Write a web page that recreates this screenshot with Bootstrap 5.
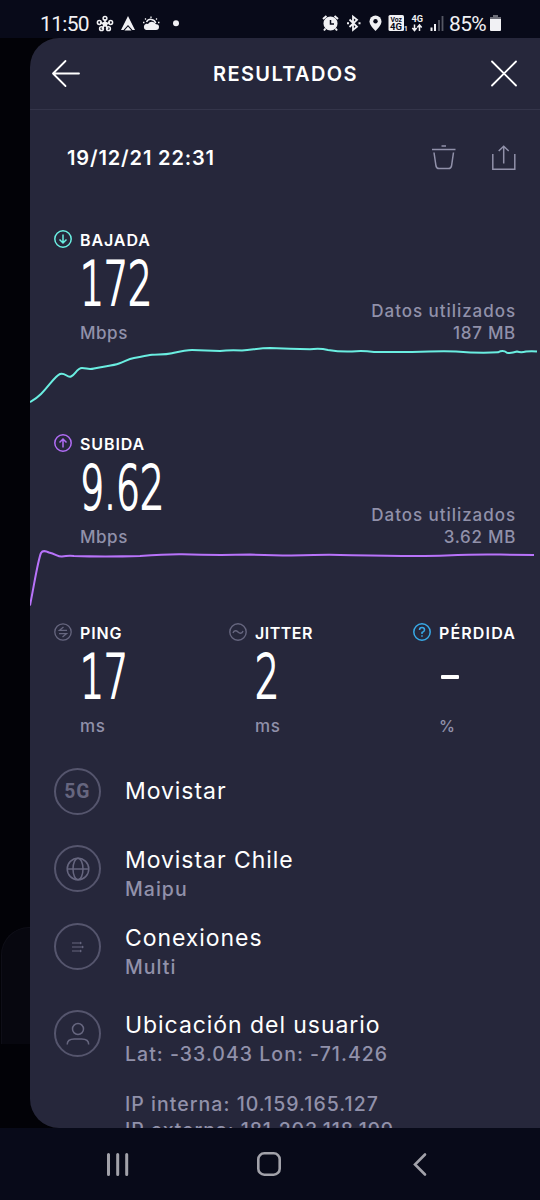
<!DOCTYPE html>
<html lang="es">
<head>
<meta charset="utf-8">
<meta name="viewport" content="width=device-width, initial-scale=1">
<title>Resultados</title>
<link href="https://cdn.jsdelivr.net/npm/bootstrap@5.3.0/dist/css/bootstrap.min.css" rel="stylesheet">
<style>
:root{--muted:#9191aa;--line:#55556d}
body{width:540px;height:1200px;background:#020207;color:#fff;font-family:Inter,"Noto Sans",sans-serif;overflow:hidden}
svg{display:block;flex:none;overflow:visible}
.statusbar{height:38px;background:#080a19;font-family:Roboto,sans-serif;color:#f1f1f4;padding:10px 39px 0 40px}
.clock{font-size:21px;line-height:28px;letter-spacing:-.67px;white-space:nowrap}
.stage{height:1090px;padding-left:30px;position:relative}
.ghost{position:absolute;left:1px;top:889px;width:60px;height:117px;background:#07070f;border:1px solid #0e0e17;border-bottom:0;border-radius:28px 0 0 0}
.sheet{position:relative;height:1090px;background:#26273b;border-radius:29px 0 0 29px;overflow:hidden}
.topbar{height:72px;border-bottom:1px solid #34354a;padding:0 23px 0 22px}
.topbar h1{font-size:20px;font-weight:600;letter-spacing:1.38px;padding-top:1px}
.daterow{height:96px;padding:0 24px 0 37px;color:var(--muted)}
.daterow time{font-size:20px;font-weight:600;color:#fff;letter-spacing:.87px}
.speed{height:204px;padding-top:22px}
.speed-body{padding:0 24px 0 50px}
.lab{height:22px;padding-left:24px;font-size:16px;font-weight:600;line-height:22px;gap:8px;letter-spacing:.9px}
.lab span{padding-top:2px}
.lab-tight{letter-spacing:.5px}
.lab-wide{letter-spacing:1.14px}
.num{font-family:"DejaVu Sans",sans-serif;font-weight:200;font-size:60px;line-height:68px;height:68px;transform:scaleX(.63);transform-origin:0 50%;white-space:nowrap;-webkit-text-stroke:2.2px #fff}
.dash{width:18px;height:4px;border-radius:1px;background:#fff;margin:32px 0 32px 2px}
.unit{font-size:17px;font-weight:500;line-height:30px;height:28px;color:var(--muted);letter-spacing:.55px}
.used{font-size:17px;font-weight:500;line-height:22px;color:var(--muted);padding-bottom:2px;letter-spacing:.95px}
.used .amount{letter-spacing:.7px}
.metrics{height:154px;padding-top:7px}
.metrics .unit{line-height:31px}
.metrics .lab span{padding-top:1px}
.pct{font-size:16px!important}
.m1{width:175px}.m2{width:184px}
.val{padding-left:50px}
.entry{padding-left:24px;gap:24px}
.ring{width:47px;height:47px;border:2px solid var(--line);border-radius:50%;color:#66667f;flex:none}
.ttl{font-size:23px;line-height:30px;font-weight:400;letter-spacing:.94px;white-space:nowrap}
.sub{font-size:19.5px;line-height:28px;font-weight:500;color:var(--muted);letter-spacing:1.03px;white-space:nowrap}
.ips{line-height:25px;padding-top:24px}
.ips div+div{letter-spacing:.9px;padding-top:1px}
.five{font-family:Roboto,sans-serif;font-weight:700;font-size:21px;line-height:1;letter-spacing:1px;transform:scaleX(.92)}
.navkeys{height:72px;background:#080a19;color:#a2a2aa;padding:0 113px 0 107px}
.home{margin-right:5px}
.h77{height:77px}.h78{height:78px}.h87{height:87px}
</style>
</head>
<body>
<header class="statusbar d-flex justify-content-between">
  <div class="d-flex">
    <span class="clock">11:50</span>
    <svg width="100" height="28" viewBox="89 10 100 28" fill="none" stroke="#f1f1f4" stroke-width="1.5">
      <path d="M105 24v-5M105 24l-5-1.5M105 24l5-1.500M105 24l-3 5M105 24l3 5"/><circle cx="105" cy="24" r="1.8" fill="#f1f1f4"/><circle cx="105" cy="18.300" r="1.900"/><circle cx="99.300" cy="22.500" r="1.900"/><circle cx="110.700" cy="22.500" r="1.900"/><circle cx="101.500" cy="28.700" r="1.900"/><circle cx="108.500" cy="28.700" r="1.900"/>
      <path d="M128 16l7 14h-2.500l-4.500-5-4.500 5H121z" fill="#f1f1f4" stroke="none"/><path d="M124.500 30.500l3.500-4 3.500 4z" fill="#f1f1f4" stroke="none"/>
      <path d="M146 30a3.300 3.300 0 010-6.200q1-.300 2 .200a4.500 4.500 0 018 .300q3-.200 3 2.700t-3 3z" fill="#f1f1f4" stroke="none"/>
      <path d="M146.500 22a5 5 0 019.200 1"/><path d="M151 16.500v1.500M145 18.500l1 1M157 18.500l-1 1M143 22.500h1.500M158 22.500h1.500" stroke-width="1.300"/>
      <circle cx="176" cy="23.300" r="3" fill="#f1f1f4" stroke="none"/>
    </svg>
  </div>
  <div class="d-flex">
    <svg width="128" height="28" viewBox="321 10 128 28" fill="none" stroke="#f1f1f4" stroke-width="1.500">
      <circle cx="330.500" cy="23.500" r="6.300" fill="#f1f1f4"/><path d="M330.500 20v4h3.500" stroke="#080a19"/><path d="M323 19l3.500-3M338 19l-3.500-3M325.500 28.500l-1.500 2M335.500 28.500l1.500 2" stroke-width="2"/>
      <path d="M349.500 19.500l7.500 7.300-4 3.200v-13.400l4 3.200-7.500 7.200" stroke-width="1.800"/><path d="M347 23.300h2M358.500 23.300h2" stroke-width="2"/>
      <path d="M375.500 15.500a6 6 0 016 6c0 4-6 9.500-6 9.500s-6-5.500-6-9.500a6 6 0 016-6z" fill="#f1f1f4" stroke="none"/><circle cx="375.500" cy="21.300" r="2.200" fill="#080a19" stroke="none"/>
      <rect x="388.500" y="15" width="15.500" height="16" rx="1.500" fill="#f1f1f4" stroke="none"/>
      <g stroke="none" font-family="Roboto,sans-serif" font-weight="700"><text x="390.500" y="21.500" font-size="7" fill="#080a19" textLength="11.500" lengthAdjust="spacingAndGlyphs">Voz</text><text x="390" y="30.300" font-size="9.500" fill="#080a19" textLength="12" lengthAdjust="spacingAndGlyphs">4G</text><text x="404" y="31" font-size="6.500" fill="#f1f1f4">1</text><text x="411.500" y="22" font-size="8.500" fill="#f1f1f4" textLength="11.500" lengthAdjust="spacingAndGlyphs">4G</text></g>
      <path d="M414.500 24.500v6M412.300 28l2.200 2.500 2.200-2.500M419.500 31v-6M417.300 27.500l2.200-2.500 2.200 2.500" stroke-width="1.500"/>
      <path d="M431.500 27.500v3.500M435 24v7" stroke-width="2"/><path d="M439 20v11M442.500 16v15" stroke="#555763" stroke-width="1.800"/>
    </svg>
    <span class="clock">85%</span>
    <svg class="ms-1" width="11" height="28" viewBox="490 10 11 28"><path d="M493 15h5v2h3v3h-11v-3h3z" fill="#6d6e78"/><path d="M490 19h11v11q0 1-1 1h-9q-1 0-1-1z" fill="#f1f1f4"/></svg>
  </div>
</header>

<div class="stage">
  <div class="ghost"></div>
  <main class="sheet">
    <div class="topbar d-flex align-items-center justify-content-between">
      <svg width="28" height="28" viewBox="0 0 28 28" fill="none" stroke="#fff" stroke-width="1.800" stroke-linecap="round" stroke-linejoin="round"><path d="M13.500 1L1 13.500 13.500 26M1 13.500h26"/></svg>
      <h1 class="m-0">RESULTADOS</h1>
      <svg width="26" height="26" viewBox="0 0 26 26" stroke="#fff" stroke-width="1.800" stroke-linecap="round"><path d="M1 .5l24 24M25 .5L1 24.500"/></svg>
    </div>
    <div class="daterow d-flex align-items-center">
      <time class="me-auto">19/12/21 22:31</time>
      <svg class="me-4" width="36" height="26" viewBox="432 145 36 26" fill="none" stroke="currentColor" stroke-width="1.500"><path d="M432 149.500h23.500M441.500 146h4.500M434 152.500l2 13.500q.500 2.500 3 2.500h9.500q2.500 0 3-2.500l2-13.500"/></svg>
      <svg width="24" height="26" viewBox="492 145 24 26" fill="none" stroke="currentColor" stroke-width="1.500"><path d="M492.800 154v15.200h22V154M503.700 163.500V146.500M498.700 151l5-4.800 5 4.800"/></svg>
    </div>

    <section class="speed">
      <div class="lab d-flex align-items-center">
        <svg width="18" height="18" viewBox="0 0 18 18" fill="none" stroke="#6aeee1" stroke-width="1.500"><circle cx="9" cy="9" r="8.200"/><path d="M9 4.500v8.500M5.500 9.500L9 13l3.500-3.500"/></svg>
        <span>BAJADA</span>
      </div>
      <div class="speed-body d-flex justify-content-between align-items-end">
        <div><div class="num">172</div><div class="unit">Mbps</div></div>
        <div class="used text-end"><div>Datos utilizados</div><div class="amount">187 MB</div></div>
      </div>
      <svg width="510" height="64" viewBox="30 346 510 64" fill="none" stroke="#6aeee1" stroke-width="2" stroke-linejoin="round"><path d="M30 402Q36 399 41 394C49 386 55 376 60 374S67 378 71 376.500S77 368 82 368S88 370 94 368.500C104 366 112 366 119 363.500S128 359 134 358S146 355.500 152 354.800S164 355 172 353.200S186 350 192 350Q206 350.300 220 351Q228 350 242 350.500C254 349.500 260 348 270 348Q290 349 310 349.300Q320 348 328 350Q340 352 352 351.500Q362 350.200 374 352H412Q440 351 456 351.500Q480 353.500 498 352.300Q503 349.500 507 352.700Q511 353.500 517 351.500Q521 353 526 351.500Q532 351 537 351.500"/></svg>
    </section>

    <section class="speed">
      <div class="lab d-flex align-items-center">
        <svg width="18" height="18" viewBox="0 0 18 18" fill="none" stroke="#b06cf5" stroke-width="1.500"><circle cx="9" cy="9" r="8.200"/><path d="M9 13.500V5M5.500 8.500L9 5l3.500 3.500"/></svg>
        <span>SUBIDA</span>
      </div>
      <div class="speed-body d-flex justify-content-between align-items-end">
        <div><div class="num">9.62</div><div class="unit">Mbps</div></div>
        <div class="used text-end"><div>Datos utilizados</div><div class="amount">3.62 MB</div></div>
      </div>
      <svg width="510" height="64" viewBox="30 550 510 64" fill="none" stroke="#b873fa" stroke-width="2" stroke-linejoin="round"><path d="M30 605.500C35 580 38 560 41 553Q43 549.500 49 552.500C56 554 58 557 62 556.500Q68 555.500 74 556Q104 557 140 556Q166 554 182 554.200Q214 555.500 250 554.600Q290 556 314 555Q330 554.300 352 555.200Q420 556.500 446 555.500Q480 554 500 554.600L534 555"/></svg>
    </section>

    <section class="metrics d-flex">
      <div class="m1">
        <div class="lab d-flex align-items-center"><svg width="18" height="18" viewBox="0 0 18 18" fill="none" stroke="#66667f" stroke-width="1.300"><circle cx="9" cy="9" r="8.200"/><path d="M13 7.300H5.500L9.500 4M5 10.700h7.500L8.500 14"/></svg><span>PING</span></div>
        <div class="val"><div class="num">17</div><div class="unit">ms</div></div>
      </div>
      <div class="m2">
        <div class="lab lab-tight d-flex align-items-center"><svg width="18" height="18" viewBox="0 0 18 18" fill="none" stroke="#66667f" stroke-width="1.400"><circle cx="9" cy="9" r="8.200"/><path d="M4 10c1-3 3.500-2.500 5-1s4 2 5-1"/></svg><span>JITTER</span></div>
        <div class="val"><div class="num">2</div><div class="unit">ms</div></div>
      </div>
      <div>
        <div class="lab lab-wide d-flex align-items-center"><svg width="18" height="18" viewBox="0 0 18 18" fill="none" stroke="#38a9e6" stroke-width="1.500"><circle cx="9" cy="9" r="8.200"/><path d="M6.500 7q0-2.500 2.500-2.500T11.500 7Q11.500 8.500 9 9.500V11M9 12.300v1.500"/></svg><span>PÉRDIDA</span></div>
        <div class="val d-flex flex-column"><div class="dash"></div><div class="unit pct">%</div></div>
      </div>
    </section>

    <section>
      <div class="entry d-flex h77">
        <div class="ring d-flex align-items-center justify-content-center"><span class="five">5G</span></div>
        <div class="ttl pt-2">Movistar</div>
      </div>
      <div class="entry d-flex h78">
        <div class="ring d-flex align-items-center justify-content-center"><svg width="24" height="24" viewBox="0 0 24 24" fill="none" stroke="currentColor" stroke-width="1.500"><circle cx="12" cy="12" r="10.800"/><ellipse cx="12" cy="12" rx="5" ry="10.800"/><path d="M1.200 12h21.600"/></svg></div>
        <div><div class="ttl">Movistar Chile</div><div class="sub">Maipu</div></div>
      </div>
      <div class="entry d-flex h87">
        <div class="ring d-flex align-items-center justify-content-center"><svg width="12" height="12" viewBox="0 0 12 12" fill="none" stroke="currentColor" stroke-width="1"><path d="M0 2h9M0 6h11M0 10h9"/><path d="M8 .500L10 2 8 3.500zM10 4.500L12 6l-2 1.500zM8 8.500l2 1.500-2 1.500z" fill="currentColor" stroke="none"/></svg></div>
        <div><div class="ttl">Conexiones</div><div class="sub">Multi</div></div>
      </div>
      <div class="entry d-flex">
        <div class="ring d-flex align-items-center justify-content-center"><svg width="24" height="24" viewBox="0 0 24 24" fill="none" stroke="currentColor" stroke-width="1.500"><circle cx="12" cy="7" r="5.500"/><path d="M1.200 22.500c0-4 3-5.500 7-5.500h7.500c4 0 7 1.500 7 5.500"/></svg></div>
        <div>
          <div class="ttl">Ubicación del usuario</div><div class="sub">Lat: -33.043 Lon: -71.426</div>
          <div class="sub ips"><div>IP interna: 10.159.165.127</div><div>IP externa: 181.203.118.199</div></div>
        </div>
      </div>
    </section>
  </main>
</div>

<nav class="navkeys d-flex align-items-center justify-content-between">
  <svg width="22" height="23" viewBox="0 0 22 23" stroke="currentColor" stroke-width="3" stroke-linecap="round"><path d="M1.500 1.500v20M10.700 1.500v20M19.700 1.500v20"/></svg>
  <svg class="home" width="24" height="24" viewBox="0 0 24 24" fill="none" stroke="currentColor" stroke-width="2.600"><rect x="1.300" y="1.300" width="21.400" height="21.400" rx="6"/></svg>
  <svg width="14" height="23" viewBox="0 0 14 23" fill="none" stroke="currentColor" stroke-width="2.600" stroke-linecap="round"><path d="M12 1.500L2 11.500l10 10"/></svg>
</nav>
<script src="https://cdn.jsdelivr.net/npm/bootstrap@5.3.0/dist/js/bootstrap.bundle.min.js"></script>
</body>
</html>
